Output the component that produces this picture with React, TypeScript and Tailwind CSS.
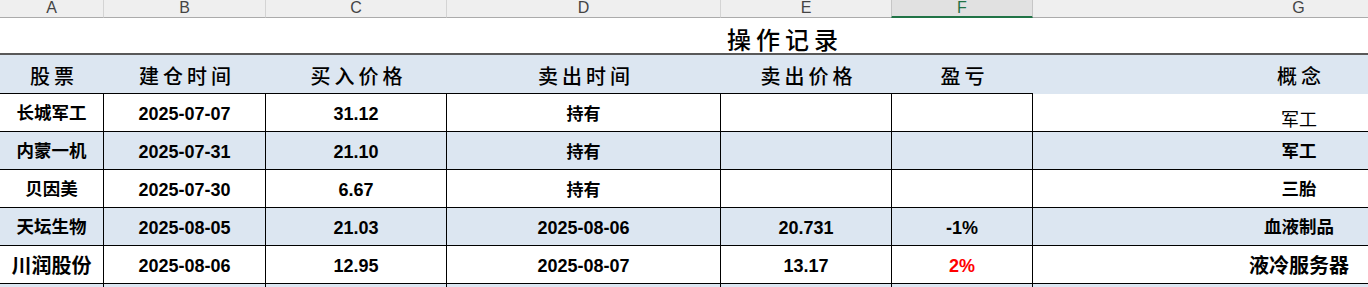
import React from 'react';

interface Trade {
  name: string;
  openDate: string;
  buyPrice: string;
  sellDate: string;
  sellPrice: string;
  pnl: string;
  concept: string;
}

const columns = ['A', 'B', 'C', 'D', 'E', 'F', 'G'];
const headers = ['股票', '建仓时间', '买入价格', '卖出时间', '卖出价格', '盈亏', '概念'];

const trades: Trade[] = [
  { name: '长城军工', openDate: '2025-07-07', buyPrice: '31.12', sellDate: '持有', sellPrice: '', pnl: '', concept: '军工' },
  { name: '内蒙一机', openDate: '2025-07-31', buyPrice: '21.10', sellDate: '持有', sellPrice: '', pnl: '', concept: '军工' },
  { name: '贝因美', openDate: '2025-07-30', buyPrice: '6.67', sellDate: '持有', sellPrice: '', pnl: '', concept: '三胎' },
  { name: '天坛生物', openDate: '2025-08-05', buyPrice: '21.03', sellDate: '2025-08-06', sellPrice: '20.731', pnl: '-1%', concept: '血液制品' },
  { name: '川润股份', openDate: '2025-08-06', buyPrice: '12.95', sellDate: '2025-08-07', sellPrice: '13.17', pnl: '2%', concept: '液冷服务器' },
];

const grid = 'grid grid-cols-[104px_162px_181px_274px_171px_141px_532px]';
const cjk = { fontFamily: '"Noto Sans CJK SC", sans-serif' };
const body = { fontFamily: '"Liberation Sans", "Noto Sans CJK SC", sans-serif' };

export default function App() {
  return (
    <div className="w-full h-[287px] overflow-hidden bg-white">
      <div className="w-[1565px]">
        {/* column letters */}
        <div className={grid} style={{ fontFamily: '"Liberation Sans", sans-serif' }}>
          {columns.map((c) => (
            <div
              key={c}
              className={
                c === 'F'
                  ? 'h-[18px] flex justify-center items-start leading-[16px] text-[16px] bg-[#e1e1e1] text-[#217346] border-r border-r-[#c6c6c6] border-l border-l-[#c6c6c6] border-b-2 border-b-[#217346] -ml-px'
                  : 'h-[18px] flex justify-center items-start leading-[16px] text-[16px] bg-[#efefef] text-[#444] border-r border-r-[#d4d4d4] border-b border-b-[#ababab]'
              }
            >
              {c}
            </div>
          ))}
        </div>

        {/* title */}
        <div className="h-[35px] flex justify-center items-center pt-[6px]">
          <span className="text-[24px] leading-none font-medium tracking-[5px] pl-[5px] text-black" style={cjk}>
            操作记录
          </span>
        </div>
        <div className="h-[2px] bg-[#595959]" />

        {/* header row */}
        <div className={`${grid} h-[38px] bg-[#dce6f1]`}>
          {headers.map((h) => (
            <div key={h} className="flex justify-center items-center pt-[4px]">
              <span className="text-[20px] leading-none font-medium tracking-[4px] pl-[4px] text-black" style={cjk}>
                {h}
              </span>
            </div>
          ))}
        </div>

        {/* data rows */}
        {trades.map((t, i) => {
          const blue = i % 2 === 1;
          const last = i === trades.length - 1;
          const rowBg = blue ? 'bg-[#dce6f1]' : 'bg-white';
          const cell = `h-[38px] border-t border-black border-r flex justify-center items-center pt-[3px] text-black ${rowBg}`;
          const cn = last ? 'text-[20px] font-bold leading-none' : 'text-[17.5px] font-bold leading-none';
          const num = 'text-[18px] font-bold leading-none';
          return (
            <div key={t.name} className={grid} style={body}>
              <div className={cell}><span className={cn}>{t.name}</span></div>
              <div className={cell}><span className={num}>{t.openDate}</span></div>
              <div className={cell}><span className={num}>{t.buyPrice}</span></div>
              <div className={cell}>
                <span className={t.sellDate === '持有' ? 'text-[17px] font-bold leading-none' : num}>{t.sellDate}</span>
              </div>
              <div className={cell}><span className={num}>{t.sellPrice}</span></div>
              <div className={`${cell} ${last ? 'bg-[#dce6f1]' : ''}`}>
                <span className={`${num} ${last ? 'text-[#ff0000]' : ''}`}>{t.pnl}</span>
              </div>
              <div
                className={`h-[38px] border-t flex justify-center ${rowBg} ${
                  i === 0 ? 'border-t-[#dce6f1] items-end pb-[2px]' : 'border-black items-center pt-[3px]'
                }`}
              >
                <span
                  className={
                    i === 0
                      ? 'text-[18px] font-normal leading-none'
                      : last
                      ? 'text-[20px] font-bold leading-none'
                      : 'text-[17.5px] font-bold leading-none'
                  }
                >
                  {t.concept}
                </span>
              </div>
            </div>
          );
        })}

        {/* next (empty) row */}
        <div className={grid}>
          {columns.map((c) => (
            <div
              key={c}
              className={`h-[38px] border-t border-black bg-[#dce6f1] ${c === 'G' ? '' : 'border-r'}`}
            />
          ))}
        </div>
      </div>
    </div>
  );
}
